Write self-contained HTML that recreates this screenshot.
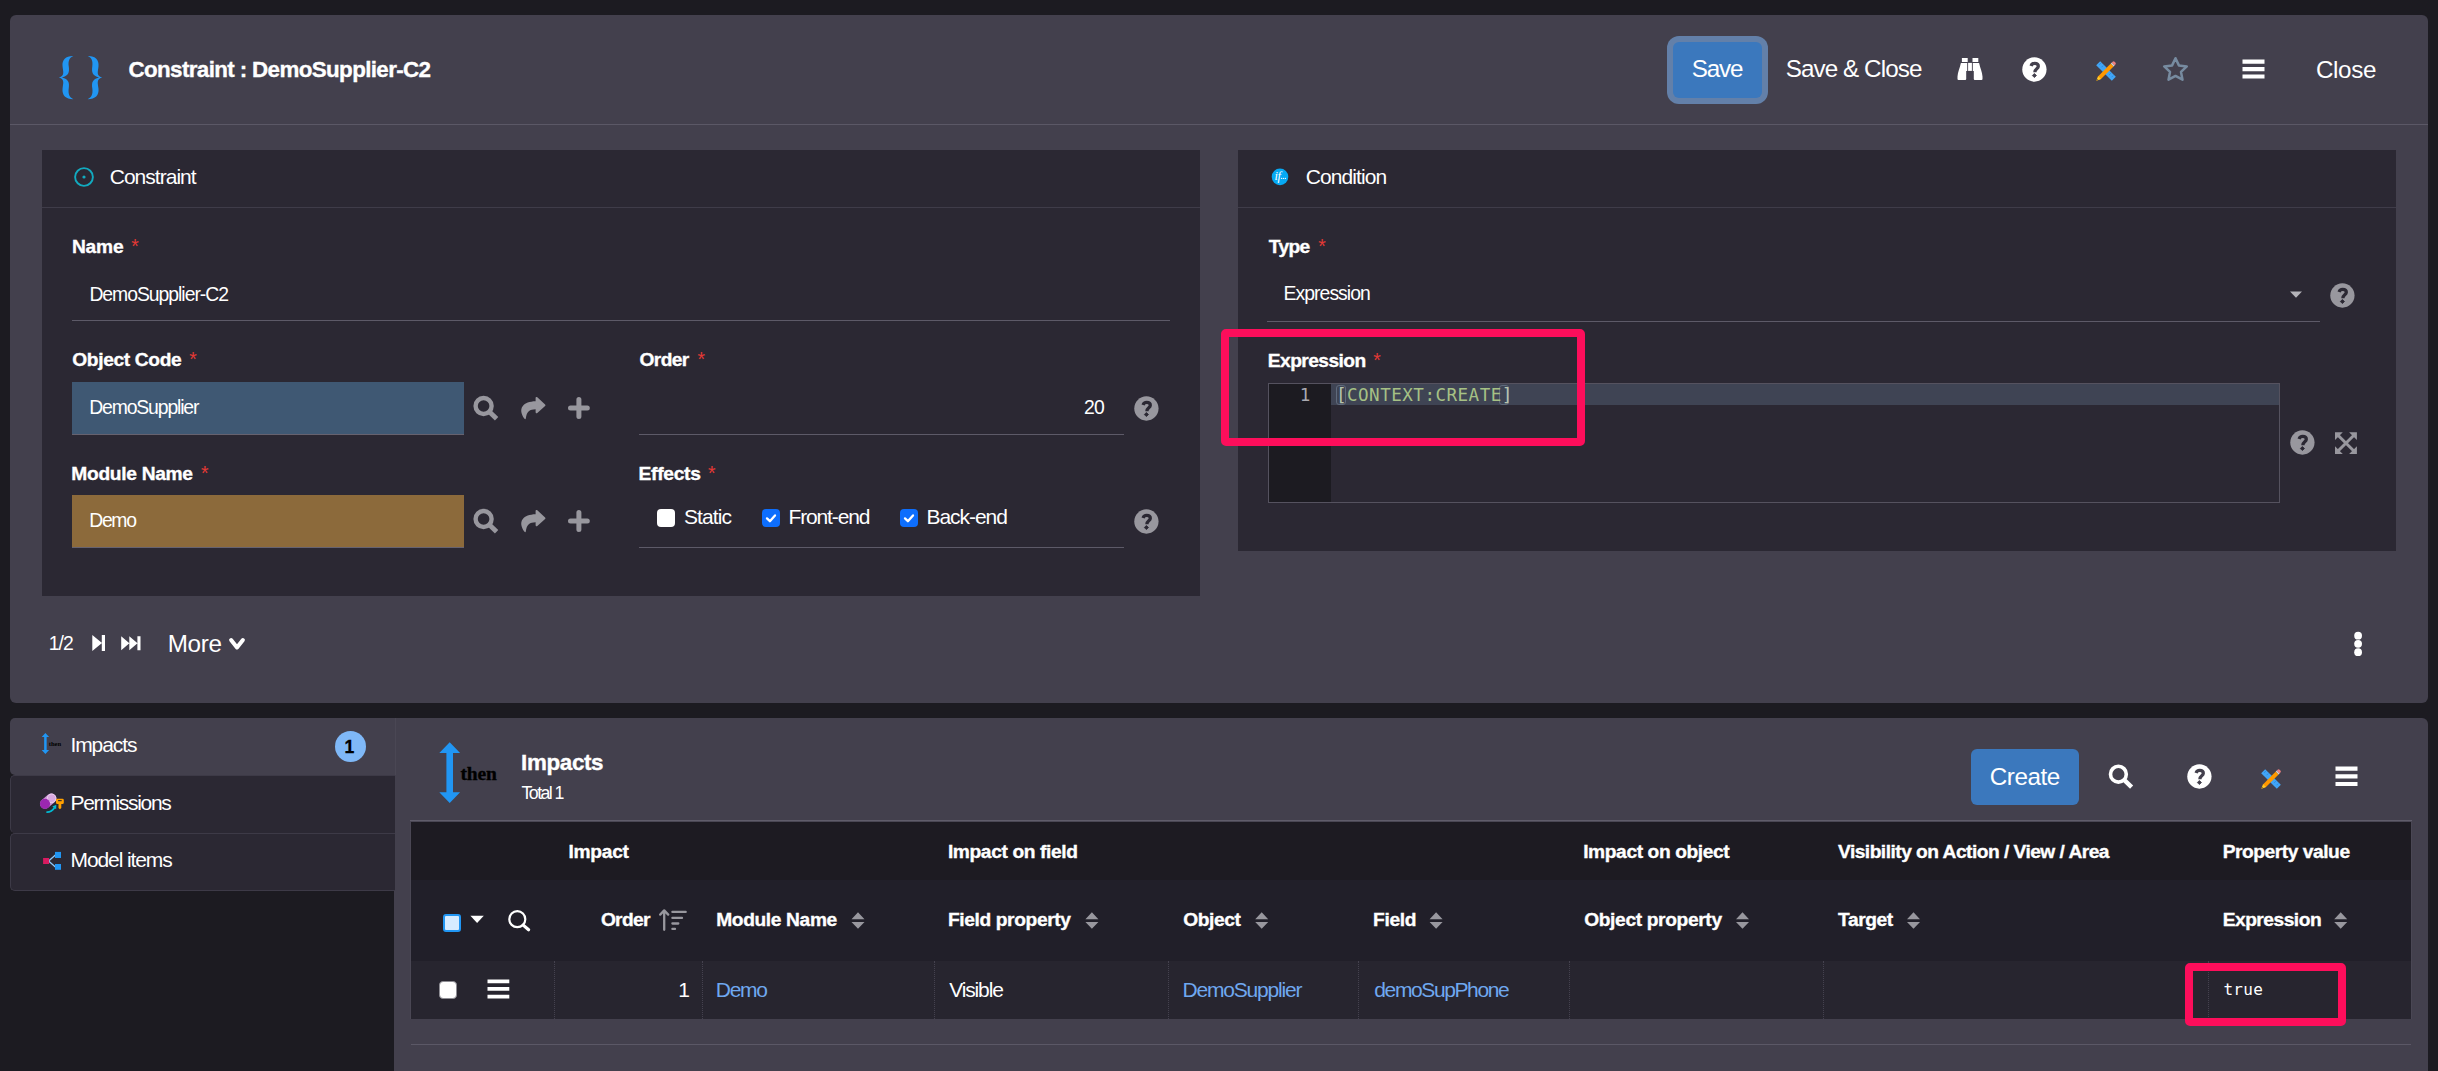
<!DOCTYPE html>
<html lang="en">
<head>
<meta charset="utf-8">
<title>Constraint : DemoSupplier-C2</title>
<style>
*{box-sizing:border-box;margin:0;padding:0}
html,body{width:2438px;height:1071px;overflow:hidden;background:#1c1b21}
body{position:relative;font-family:"Liberation Sans",sans-serif;color:#fff}
.abs,.t,svg.i{position:absolute}
.t{white-space:pre;line-height:normal;margin:0;display:block}
.b{-webkit-text-stroke:.35px currentColor}
h1.t,h2.t,label.t{font-weight:700}
.panel{background:#43404d}
.card{background:#2b2833}
.hl{background:#5d5a68;height:1px}
.btn{background:#3b78bd;border-radius:6px}
.pink{border:8px solid #fd0e5b;border-radius:5px}
.q{border-radius:50%;background:#98979e}
.sep{width:0;border-left:1px dotted #45424f;top:961px;height:58px}
</style>
</head>
<body>

<main>
<form>
<!-- ============ top form panel ============ -->
<div class="abs panel" style="left:10px;top:15px;width:2418px;height:688px;border-radius:6px"></div>
<div class="abs hl" style="left:10px;top:124px;width:2418px;background:#5b5866"></div>

<header>
<!-- braces logo -->
<svg class="i" style="left:40px;top:40px" width="100" height="70" viewBox="0 0 1530 1071">
 <g fill="#2196f3">
  <path id="br" d="M510,243 C395,240 335,300 345,400 C352,480 385,545 290,573 C385,601 352,666 345,746 C335,846 395,906 510,905 C450,880 428,830 440,740 C452,650 440,600 335,573 C440,546 452,496 440,406 C428,316 450,268 510,243 Z"/>
  <path d="M510,243 C395,240 335,300 345,400 C352,480 385,545 290,573 C385,601 352,666 345,746 C335,846 395,906 510,905 C450,880 428,830 440,740 C452,650 440,600 335,573 C440,546 452,496 440,406 C428,316 450,268 510,243 Z" transform="translate(1240,0) scale(-1,1)"/>
 </g>
</svg>

<!-- Save button w/ focus ring -->
<div class="abs" style="left:1667px;top:36px;width:101px;height:68px;border-radius:12px;background:#6380a9"></div>
<div class="abs btn" style="left:1673px;top:42px;width:89px;height:56px;background:#3b78bd"></div>

<!-- binoculars -->
<svg class="i" style="left:1957px;top:57px" width="27" height="24" viewBox="0 0 27 24">
 <g fill="#fff">
  <path d="M4.9,1 h5.8 v3.9 h-5.8z M15.5,1 h5.8 v3.9 h-5.8z"/>
  <path d="M3.9,5.9 H10.2 V13.9 H9.2 V22 a1,1 0 0 1 -1,1 H1.5 a1,1 0 0 1 -1,-1 V19.5 C.8,14.5 2.8,11.5 3.9,5.9 Z"/>
  <path d="M22.1,5.9 H15.8 V13.9 H16.8 V22 a1,1 0 0 0 1,1 H24.5 a1,1 0 0 0 1,-1 V19.5 C25.2,14.5 23.2,11.5 22.1,5.9 Z"/>
  <path d="M11.1,5.9 h3.8 v8 h-3.8z"/>
 </g>
</svg>
<!-- help -->
<svg class="i" style="left:2022px;top:56.5px" width="25" height="25" viewBox="0 0 25 25"><circle cx="12.4" cy="12.5" r="12.15" fill="#fff"/><path d="M9.1,8.9 C9.7,7 11.1,6.45 12.7,6.45 C14.8,6.45 16.3,7.6 16.3,9.3 C16.3,12 12.9,11.7 12.9,15.3" fill="none" stroke="#43404d" stroke-width="3.3"/><path d="M12.4,16.5 L14.5,18.5 L12.4,20.6 L10.3,18.5 Z" fill="#43404d" stroke="#43404d" stroke-width=".8" stroke-linejoin="round"/></svg>
<!-- pencil & ruler -->
<svg class="i" style="left:2095px;top:60px" width="22" height="22" viewBox="0 0 22 22">
 <path d="M1.2,5.2 L5.2,1.2 L20.8,16.8 L16.8,20.8 Z" fill="#42a5f5"/>
 <path d="M4.2,4.8l1.6,-1.6 M6.6,7.2l1.6,-1.6 M14.2,14.8l1.6,-1.6 M16.6,17.2l1.6,-1.6" stroke="#1e88e5" stroke-width=".8"/>
 <path d="M3.2,16.2 L15.8,3.6 L18.6,6.4 L6,19 L1.4,20.8 Z" fill="#ff9800"/>
 <path d="M15.8,3.6 L16.8,2.6 L19.6,5.4 L18.6,6.4 Z" fill="#cfd8dc"/>
 <path d="M16.8,2.6 L17.6,1.8 a1.4,1.4 0 0 1 2,0 l0.8,0.8 a1.4,1.4 0 0 1 0,2 L19.6,5.4 Z" fill="#ef8080"/>
 <path d="M3.2,16.2 L6,19 L1.4,20.8 Z" fill="#ffca28"/>
 <path d="M1.4,20.8 L2.1,18.9 L3.3,20.1 Z" fill="#6d5a2c"/>
</svg>
<!-- star -->
<svg class="i" style="left:2161px;top:55px" width="29" height="28" viewBox="0 0 29 28"><path d="M14.5,3.2 L17.9,10.4 L25.8,11.4 L20,16.9 L21.5,24.7 L14.5,20.9 L7.5,24.7 L9,16.9 L3.2,11.4 L11.1,10.4 Z" fill="none" stroke="#778ba0" stroke-width="2.5" stroke-linejoin="round"/></svg>
<!-- menu -->
<svg class="i" style="left:2242px;top:59px" width="23" height="20" viewBox="0 0 23 20"><path d="M.5,.5h22v4.2h-22z M.5,8h22v4.2h-22z M.5,15.4h22v4.2h-22z" fill="#fff"/></svg>
<h1 class="t b" style="left:128.50px;top:57.00px;font-family:'Liberation Sans', sans-serif;font-size:22.4px;font-weight:700;color:#fff;letter-spacing:-0.636px;">Constraint : DemoSupplier-C2</h1>
<span class="t" style="left:1691.70px;top:55.40px;font-family:'Liberation Sans', sans-serif;font-size:24.24px;font-weight:400;color:#fff;letter-spacing:-1.153px;">Save</span>
<span class="t" style="left:1785.70px;top:55.40px;font-family:'Liberation Sans', sans-serif;font-size:24.24px;font-weight:400;color:#fff;letter-spacing:-0.923px;">Save &amp; Close</span>
<span class="t" style="left:2315.90px;top:55.60px;font-family:'Liberation Sans', sans-serif;font-size:24.24px;font-weight:400;color:#fff;letter-spacing:-0.345px;">Close</span>
</header>

<article>
<!-- ============ Constraint card ============ -->
<div class="abs card" style="left:42px;top:150px;width:1158px;height:446px"></div>
<div class="abs hl" style="left:42px;top:207px;width:1158px;background:#3f3c49"></div>
<svg class="i" style="left:73px;top:166px" width="22" height="22" viewBox="0 0 22 22"><circle cx="11" cy="11" r="8.9" fill="none" stroke="#12aabf" stroke-width="1.9"/><circle cx="11" cy="11" r="1.6" fill="#12aabf"/></svg>

<div class="abs hl" style="left:72px;top:320px;width:1098px"></div>
<div class="abs" style="left:72px;top:382px;width:392px;height:53px;background:#3f5873;border-bottom:1px solid #66626f"></div>
<div class="abs" style="left:72px;top:495px;width:392px;height:53px;background:#8c6a3b;border-bottom:1px solid #66626f"></div>
<div class="abs hl" style="left:639px;top:434px;width:485px"></div>
<div class="abs hl" style="left:639px;top:547px;width:485px"></div>

<!-- search / goto / add icons  (row 1 & 2) -->
<svg class="i" style="left:470px;top:393px" width="125" height="30" viewBox="0 0 125 30">
 <g id="acts">
  <circle cx="13.6" cy="13" r="8" fill="none" stroke="#98979e" stroke-width="4.4"/>
  <path d="M19.6,19 L26.6,25.8" stroke="#98979e" stroke-width="4.8" stroke-linecap="butt"/>
  <path d="M65.6,5 a1,1 0 0 1 1.7,-.7 L75.1,11.4 a1,1 0 0 1 0,1.5 L67.3,20 a1,1 0 0 1 -1.7,-.7 V16.2 C59.8,16.4 56.6,18.2 55.8,25.6 C55.7,26.4 54.9,26.4 54.5,25.8 C47,15.2 53.6,8.4 65.6,8.2 Z" fill="#98979e"/>
  <path d="M108.9,6.6 V23.4 M100.5,15 H117.3" stroke="#98979e" stroke-width="5" stroke-linecap="round"/>
 </g>
</svg>
<svg class="i" style="left:470px;top:506px" width="125" height="30" viewBox="0 0 125 30">
  <circle cx="13.6" cy="13" r="8" fill="none" stroke="#98979e" stroke-width="4.4"/>
  <path d="M19.6,19 L26.6,25.8" stroke="#98979e" stroke-width="4.8" stroke-linecap="butt"/>
  <path d="M65.6,5 a1,1 0 0 1 1.7,-.7 L75.1,11.4 a1,1 0 0 1 0,1.5 L67.3,20 a1,1 0 0 1 -1.7,-.7 V16.2 C59.8,16.4 56.6,18.2 55.8,25.6 C55.7,26.4 54.9,26.4 54.5,25.8 C47,15.2 53.6,8.4 65.6,8.2 Z" fill="#98979e"/>
  <path d="M108.9,6.6 V23.4 M100.5,15 H117.3" stroke="#98979e" stroke-width="5" stroke-linecap="round"/>
</svg>

<!-- help bubbles -->
<svg class="i" style="left:1133.5px;top:396px" width="25" height="25" viewBox="0 0 25 25"><circle cx="12.4" cy="12.5" r="12.15" fill="#98979e"/><path d="M9.1,8.9 C9.7,7 11.1,6.45 12.7,6.45 C14.8,6.45 16.3,7.6 16.3,9.3 C16.3,12 12.9,11.7 12.9,15.3" fill="none" stroke="#2b2833" stroke-width="3.3"/><path d="M12.4,16.5 L14.5,18.5 L12.4,20.6 L10.3,18.5 Z" fill="#2b2833" stroke="#2b2833" stroke-width=".8" stroke-linejoin="round"/></svg>
<svg class="i" style="left:1133.5px;top:508.5px" width="25" height="25" viewBox="0 0 25 25"><circle cx="12.4" cy="12.5" r="12.15" fill="#98979e"/><path d="M9.1,8.9 C9.7,7 11.1,6.45 12.7,6.45 C14.8,6.45 16.3,7.6 16.3,9.3 C16.3,12 12.9,11.7 12.9,15.3" fill="none" stroke="#2b2833" stroke-width="3.3"/><path d="M12.4,16.5 L14.5,18.5 L12.4,20.6 L10.3,18.5 Z" fill="#2b2833" stroke="#2b2833" stroke-width=".8" stroke-linejoin="round"/></svg>

<!-- checkboxes -->
<div class="abs" style="left:657px;top:509px;width:18px;height:18px;border-radius:4px;background:#fff"></div>
<svg class="i" style="left:762px;top:509px" width="18" height="18" viewBox="0 0 18 18"><rect width="18" height="18" rx="4" fill="#0d6efd"/><path d="M5,9.4 L7.9,12.2 L13,6.4" fill="none" stroke="#fff" stroke-width="2.3" stroke-linecap="round" stroke-linejoin="round"/></svg>
<svg class="i" style="left:900px;top:509px" width="18" height="18" viewBox="0 0 18 18"><rect width="18" height="18" rx="4" fill="#0d6efd"/><path d="M5,9.4 L7.9,12.2 L13,6.4" fill="none" stroke="#fff" stroke-width="2.3" stroke-linecap="round" stroke-linejoin="round"/></svg>
</article>

<article>
<!-- ============ Condition card ============ -->
<div class="abs card" style="left:1238px;top:150px;width:1158px;height:401px"></div>
<div class="abs hl" style="left:1238px;top:207px;width:1158px;background:#3f3c49"></div>
<svg class="i" style="left:1271px;top:168px" width="18" height="18" viewBox="0 0 18 18"><circle cx="9" cy="8.85" r="8.3" fill="#06a9f4"/><text x="3.4" y="12.4" font-family="Liberation Serif" font-style="italic" font-size="12.5" fill="#fff" letter-spacing="-.3">if</text><g fill="#e8f6fe"><circle cx="10.6" cy="10.4" r=".7"/><circle cx="12.5" cy="10.4" r=".7"/><circle cx="14.4" cy="10.4" r=".7"/></g></svg>
<div class="abs hl" style="left:1267px;top:321px;width:1053px"></div>
<svg class="i" style="left:2289px;top:291px" width="14" height="8" viewBox="0 0 14 8"><path d="M1,.6 H13 L7,6.8 Z" fill="#b4b3b9"/></svg>
<svg class="i" style="left:2329.5px;top:282.5px" width="25" height="25" viewBox="0 0 25 25"><circle cx="12.4" cy="12.5" r="12.15" fill="#98979e"/><path d="M9.1,8.9 C9.7,7 11.1,6.45 12.7,6.45 C14.8,6.45 16.3,7.6 16.3,9.3 C16.3,12 12.9,11.7 12.9,15.3" fill="none" stroke="#2b2833" stroke-width="3.3"/><path d="M12.4,16.5 L14.5,18.5 L12.4,20.6 L10.3,18.5 Z" fill="#2b2833" stroke="#2b2833" stroke-width=".8" stroke-linejoin="round"/></svg>

<!-- code editor -->
<div class="abs" style="left:1268px;top:383px;width:1012px;height:120px;border:1px solid #55525f;background:#2b2833"></div>
<div class="abs" style="left:1269px;top:384px;width:62px;height:118px;background:#1c1b21"></div>
<div class="abs" style="left:1331px;top:384px;width:948px;height:21px;background:#3f4454"></div>
<div class="abs" style="left:1336px;top:385px;width:10px;height:20px;border:1px solid #5f6a7c;border-radius:3px"></div>
<div class="abs" style="left:1499px;top:385px;width:10px;height:20px;border:1px solid #5f6a7c;border-radius:3px"></div>
<svg class="i" style="left:2290px;top:430px" width="25" height="25" viewBox="0 0 25 25"><circle cx="12.4" cy="12.5" r="12.15" fill="#98979e"/><path d="M9.1,8.9 C9.7,7 11.1,6.45 12.7,6.45 C14.8,6.45 16.3,7.6 16.3,9.3 C16.3,12 12.9,11.7 12.9,15.3" fill="none" stroke="#2b2833" stroke-width="3.3"/><path d="M12.4,16.5 L14.5,18.5 L12.4,20.6 L10.3,18.5 Z" fill="#2b2833" stroke="#2b2833" stroke-width=".8" stroke-linejoin="round"/></svg>
<svg class="i" style="left:2334px;top:431px" width="24" height="24" viewBox="0 0 24 24">
 <path d="M1,1.2 h7.8 l-7.8,7.8z M22.9,1.2 v7.8 l-7.8,-7.8z M1,23 v-7.8 l7.8,7.8z M22.9,23 h-7.8 l7.8,-7.8z" fill="#98979e"/>
 <path d="M4,4.2 L19.9,20 M19.9,4.2 L4,20" stroke="#98979e" stroke-width="3" fill="none"/>
</svg>
</article>

<!-- card titles, field labels and values -->
<span class="t" style="left:109.70px;top:165.00px;font-family:'Liberation Sans', sans-serif;font-size:21.01px;font-weight:400;color:#fff;letter-spacing:-0.975px;">Constraint</span>
<span class="t" style="left:1305.80px;top:165.00px;font-family:'Liberation Sans', sans-serif;font-size:21.01px;font-weight:400;color:#fff;letter-spacing:-0.918px;">Condition</span>
<label class="t b" style="left:71.90px;top:235.80px;font-family:'Liberation Sans', sans-serif;font-size:19.2px;font-weight:700;color:#fff;letter-spacing:-0.196px;">Name</label>
<span class="t" style="left:131.30px;top:234.80px;font-family:'Liberation Sans', sans-serif;font-size:19.39px;font-weight:400;color:#e53935;letter-spacing:0.000px;">*</span>
<label class="t b" style="left:72.30px;top:348.80px;font-family:'Liberation Sans', sans-serif;font-size:19.2px;font-weight:700;color:#fff;letter-spacing:-0.364px;">Object Code</label>
<span class="t" style="left:189.20px;top:347.80px;font-family:'Liberation Sans', sans-serif;font-size:19.39px;font-weight:400;color:#e53935;letter-spacing:0.000px;">*</span>
<label class="t b" style="left:639.60px;top:348.80px;font-family:'Liberation Sans', sans-serif;font-size:19.2px;font-weight:700;color:#fff;letter-spacing:-0.646px;">Order</label>
<span class="t" style="left:697.40px;top:347.80px;font-family:'Liberation Sans', sans-serif;font-size:19.39px;font-weight:400;color:#e53935;letter-spacing:0.000px;">*</span>
<label class="t b" style="left:71.30px;top:463.30px;font-family:'Liberation Sans', sans-serif;font-size:19.2px;font-weight:700;color:#fff;letter-spacing:-0.307px;">Module Name</label>
<span class="t" style="left:201.00px;top:462.30px;font-family:'Liberation Sans', sans-serif;font-size:19.39px;font-weight:400;color:#e53935;letter-spacing:0.000px;">*</span>
<label class="t b" style="left:638.60px;top:463.30px;font-family:'Liberation Sans', sans-serif;font-size:19.2px;font-weight:700;color:#fff;letter-spacing:-0.285px;">Effects</label>
<span class="t" style="left:708.00px;top:462.30px;font-family:'Liberation Sans', sans-serif;font-size:19.39px;font-weight:400;color:#e53935;letter-spacing:0.000px;">*</span>
<label class="t b" style="left:1268.80px;top:235.90px;font-family:'Liberation Sans', sans-serif;font-size:19.2px;font-weight:700;color:#fff;letter-spacing:-0.629px;">Type</label>
<span class="t" style="left:1318.20px;top:234.90px;font-family:'Liberation Sans', sans-serif;font-size:19.39px;font-weight:400;color:#e53935;letter-spacing:0.000px;">*</span>
<label class="t b" style="left:1267.80px;top:350.00px;font-family:'Liberation Sans', sans-serif;font-size:19.2px;font-weight:700;color:#fff;letter-spacing:-0.569px;">Expression</label>
<span class="t" style="left:1373.20px;top:349.00px;font-family:'Liberation Sans', sans-serif;font-size:19.39px;font-weight:400;color:#e53935;letter-spacing:0.000px;">*</span>
<span class="t" style="left:89.40px;top:282.90px;font-family:'Liberation Sans', sans-serif;font-size:19.39px;font-weight:400;color:#fff;letter-spacing:-1.029px;">DemoSupplier-C2</span>
<span class="t" style="left:89.20px;top:395.60px;font-family:'Liberation Sans', sans-serif;font-size:19.39px;font-weight:400;color:#fff;letter-spacing:-1.138px;">DemoSupplier</span>
<span class="t" style="left:89.20px;top:508.50px;font-family:'Liberation Sans', sans-serif;font-size:19.39px;font-weight:400;color:#fff;letter-spacing:-1.302px;">Demo</span>
<span class="t" style="left:1084.00px;top:395.60px;font-family:'Liberation Sans', sans-serif;font-size:19.39px;font-weight:400;color:#fff;letter-spacing:-0.775px;">20</span>
<span class="t" style="left:683.90px;top:504.80px;font-family:'Liberation Sans', sans-serif;font-size:21.01px;font-weight:400;color:#fff;letter-spacing:-0.884px;">Static</span>
<span class="t" style="left:788.50px;top:504.80px;font-family:'Liberation Sans', sans-serif;font-size:21.01px;font-weight:400;color:#fff;letter-spacing:-1.146px;">Front-end</span>
<span class="t" style="left:926.50px;top:504.80px;font-family:'Liberation Sans', sans-serif;font-size:21.01px;font-weight:400;color:#fff;letter-spacing:-1.048px;">Back-end</span>
<span class="t" style="left:1283.60px;top:281.50px;font-family:'Liberation Sans', sans-serif;font-size:19.39px;font-weight:400;color:#fff;letter-spacing:-0.963px;">Expression</span>
<span class="t" style="left:1299.80px;top:384.50px;font-family:'DejaVu Sans Mono', 'Liberation Mono', monospace;font-size:17.6px;font-weight:400;color:#a9a9b0;letter-spacing:0.000px;">1</span>
<span class="t" style="left:1335.90px;top:384.50px;font-family:'DejaVu Sans Mono', 'Liberation Mono', monospace;font-size:17.6px;font-weight:400;color:#a6c185;letter-spacing:0.468px;"><span style="color:#b7c3ad">[</span>CONTEXT:CREATE<span style="color:#b7c3ad">]</span></span>

<footer>
<!-- footer of form panel -->
<svg class="i" style="left:91px;top:634px" width="52" height="18" viewBox="0 0 52 18">
 <g fill="#fff">
  <path d="M1.3,.9 L11,9 L1.3,17.1 Z M10.8,.9 h3.2 v16.2 h-3.2z"/>
  <path d="M30.2,2.2 L38.4,9.2 L30.2,16.2 Z M38.3,2.2 L46.5,9.2 L38.3,16.2 Z M46.4,2.2 h3.1 v14 h-3.1z"/>
 </g>
</svg>
<svg class="i" style="left:227px;top:636px" width="20" height="16" viewBox="0 0 20 16"><path d="M4.1,4 L10,11.5 L15.9,4" fill="none" stroke="#fff" stroke-width="4" stroke-linecap="round" stroke-linejoin="round"/></svg>
<svg class="i" style="left:2353px;top:631px" width="10" height="26" viewBox="0 0 10 26"><g fill="#fff"><circle cx="5.1" cy="4.7" r="3.9"/><circle cx="5.1" cy="12.8" r="3.9"/><circle cx="5.1" cy="21.2" r="3.9"/></g></svg>
<span class="t" style="left:48.80px;top:632.20px;font-family:'Liberation Sans', sans-serif;font-size:19.39px;font-weight:400;color:#fff;letter-spacing:-1.029px;">1/2</span>
<span class="t" style="left:167.70px;top:629.60px;font-family:'Liberation Sans', sans-serif;font-size:24.24px;font-weight:400;color:#fff;letter-spacing:-0.345px;">More</span>
</footer>
</form>

<nav>
<!-- ============ bottom: tabs ============ -->
<div class="abs panel" style="left:394px;top:718px;width:2034px;height:360px;border-radius:0 6px 0 0"></div>
<div class="abs panel" style="left:10px;top:718px;width:386px;height:57px;border-radius:5px 0 0 5px"></div>
<div class="abs" style="left:395px;top:718px;width:1px;height:57px;background:#4a4754"></div>
<div class="abs card" style="left:10px;top:775px;width:385px;height:58px;border:1px solid #3d3a47;border-right:0;border-bottom:0;border-radius:5px 0 0 5px"></div>
<div class="abs card" style="left:10px;top:833px;width:385px;height:58px;border:1px solid #3d3a47;border-right:0;border-radius:5px 0 0 5px"></div>
<!-- tab icons -->
<svg class="i" style="left:40px;top:732px" width="24" height="24" viewBox="0 0 24 24">
 <path d="M5.4,1 L9.1,5 H6.65 V18.1 H9.1 L5.4,22.1 L1.7,18.1 H4.15 V5 H1.7 Z" fill="#2196f3"/>
 <text x="8.7" y="14" font-family="Liberation Serif" font-weight="700" font-size="6.6" fill="#000">then</text>
</svg>
<svg class="i" style="left:38px;top:791px" width="28" height="24" viewBox="0 0 28 24">
 <path d="M7,12.8 L13.4,7.4" stroke="#ce93d8" stroke-width="10" stroke-linecap="round"/>
 <circle cx="13.6" cy="7.3" r="4.3" fill="#d9a9e1" stroke="#ebd3ef" stroke-width="1"/>
 <circle cx="7" cy="12.8" r="5.1" fill="#9c27b0"/>
 <path d="M8.4,21.1 Q13.6,21.4 16.4,16.8" fill="none" stroke="#00bcd4" stroke-width="1.8"/>
 <path d="M14.3,15.5 L18.3,13.7 L18.2,18.2 Z" fill="#00bcd4"/>
 <path d="M19.4,7.7 h5 a1.4,1.4 0 0 1 1.4,1.4 v2.6 a1.4,1.4 0 0 1 -1.4,1.4 h-1.1 v4 l-1.4,1.1 l-1.4,-1.1 v-4 h-1.1 a1.4,1.4 0 0 1 -1.4,-1.4 v-2.6 a1.4,1.4 0 0 1 1.4,-1.4z" fill="#ffa000"/>
 <rect x="20.1" y="9.1" width="3.6" height="1.1" fill="#2b2833"/>
</svg>
<svg class="i" style="left:42px;top:851px" width="21" height="20" viewBox="0 0 21 20">
 <path d="M6.6,10 L13.4,4 M6.6,10 L13.4,16" stroke="#90caf9" stroke-width="1.3" fill="none"/>
 <rect x="1.1" y="7" width="6" height="6" fill="#d81b60"/>
 <rect x="13" y=".9" width="6" height="6.1" fill="#2196f3"/>
 <rect x="13" y="13" width="6" height="5.8" fill="#2196f3"/>
</svg>
<div class="abs" style="left:335px;top:731px;width:31px;height:31px;border-radius:50%;background:#7fb8f7"></div>
<span class="t" style="left:70.50px;top:732.80px;font-family:'Liberation Sans', sans-serif;font-size:21.01px;font-weight:400;color:#fff;letter-spacing:-1.103px;">Impacts</span>
<span class="t" style="left:70.50px;top:790.60px;font-family:'Liberation Sans', sans-serif;font-size:21.01px;font-weight:400;color:#fff;letter-spacing:-1.306px;">Permissions</span>
<span class="t" style="left:70.50px;top:848.20px;font-family:'Liberation Sans', sans-serif;font-size:21.01px;font-weight:400;color:#fff;letter-spacing:-1.100px;">Model items</span>
<span class="t b" style="left:344.60px;top:736.80px;font-family:'Liberation Sans', sans-serif;font-size:17.6px;font-weight:700;color:#000;letter-spacing:0.000px;">1</span>
</nav>

<section>
<!-- ============ bottom: list panel ============ -->
<svg class="i" style="left:438px;top:741px" width="24" height="64" viewBox="0 0 24 64"><path d="M11.7,1.3 L22.1,12 H15 V51.3 H22.1 L11.7,62 L1.3,51.3 H8.4 V12 H1.3 Z" fill="#2196f3"/></svg>
<div class="abs btn" style="left:1971px;top:749px;width:108px;height:56px"></div>
<svg class="i" style="left:2107px;top:763px" width="28" height="28" viewBox="0 0 28 28"><circle cx="11.4" cy="11.2" r="7.9" fill="none" stroke="#fff" stroke-width="3.6"/><path d="M17.4,17.2 L24.6,24.2" stroke="#fff" stroke-width="4.4"/></svg>
<svg class="i" style="left:2186.5px;top:763.5px" width="25" height="25" viewBox="0 0 25 25"><circle cx="12.4" cy="12.5" r="12.15" fill="#fff"/><path d="M9.1,8.9 C9.7,7 11.1,6.45 12.7,6.45 C14.8,6.45 16.3,7.6 16.3,9.3 C16.3,12 12.9,11.7 12.9,15.3" fill="none" stroke="#43404d" stroke-width="3.3"/><path d="M12.4,16.5 L14.5,18.5 L12.4,20.6 L10.3,18.5 Z" fill="#43404d" stroke="#43404d" stroke-width=".8" stroke-linejoin="round"/></svg>
<svg class="i" style="left:2259.5px;top:767.5px" width="22" height="22" viewBox="0 0 22 22">
 <path d="M1.2,5.2 L5.2,1.2 L20.8,16.8 L16.8,20.8 Z" fill="#42a5f5"/>
 <path d="M4.2,4.8l1.6,-1.6 M6.6,7.2l1.6,-1.6 M14.2,14.8l1.6,-1.6 M16.6,17.2l1.6,-1.6" stroke="#1e88e5" stroke-width=".8"/>
 <path d="M3.2,16.2 L15.8,3.6 L18.6,6.4 L6,19 L1.4,20.8 Z" fill="#ff9800"/>
 <path d="M15.8,3.6 L16.8,2.6 L19.6,5.4 L18.6,6.4 Z" fill="#cfd8dc"/>
 <path d="M16.8,2.6 L17.6,1.8 a1.4,1.4 0 0 1 2,0 l0.8,0.8 a1.4,1.4 0 0 1 0,2 L19.6,5.4 Z" fill="#ef8080"/>
 <path d="M3.2,16.2 L6,19 L1.4,20.8 Z" fill="#ffca28"/>
 <path d="M1.4,20.8 L2.1,18.9 L3.3,20.1 Z" fill="#6d5a2c"/>
</svg>
<svg class="i" style="left:2334.5px;top:765.5px" width="23" height="21" viewBox="0 0 23 21"><path d="M.5,.5h22v4.2h-22z M.5,8.2h22v4.2h-22z M.5,15.9h22v4.2h-22z" fill="#fff"/></svg>
<span class="t b" style="left:460.60px;top:763.20px;font-family:'Liberation Serif', serif;font-size:19.5px;font-weight:700;color:#000;letter-spacing:-0.231px;">then</span>
<h2 class="t b" style="left:521.00px;top:750.00px;font-family:'Liberation Sans', sans-serif;font-size:22.4px;font-weight:700;color:#fff;letter-spacing:-0.345px;">Impacts</h2>
<span class="t" style="left:521.60px;top:783.00px;font-family:'Liberation Sans', sans-serif;font-size:17.78px;font-weight:400;color:#fff;letter-spacing:-1.610px;">Total 1</span>
<span class="t" style="left:1989.70px;top:762.80px;font-family:'Liberation Sans', sans-serif;font-size:24.24px;font-weight:400;color:#fff;letter-spacing:-0.432px;">Create</span>

<!-- table -->
<div class="abs" style="left:410px;top:820px;width:2002px;height:1px;background:#605d6b"></div>
<div class="abs" style="left:410px;top:821px;width:2002px;height:198px;background:#4a4754"></div>
<div class="abs" style="left:411px;top:822px;width:2000px;height:58px;background:#1d1b22"></div>
<div class="abs" style="left:411px;top:880px;width:2000px;height:81px;background:#211f29"></div>
<div class="abs" style="left:411px;top:961px;width:2000px;height:58px;background:#27252f"></div>
<div class="abs hl" style="left:411px;top:1044px;width:2000px;background:#5b5866"></div>
<div class="abs sep" style="left:554px"></div><div class="abs sep" style="left:702px"></div><div class="abs sep" style="left:934px"></div>
<div class="abs sep" style="left:1168px"></div><div class="abs sep" style="left:1358px"></div><div class="abs sep" style="left:1569px"></div>
<div class="abs sep" style="left:1823px"></div><div class="abs sep" style="left:2208px"></div>

<!-- select-all, caret, search -->
<div class="abs" style="left:443px;top:914px;width:18px;height:18px;border:2.6px solid #2196f3;border-radius:3px;background:#d6ebff"></div>
<svg class="i" style="left:469px;top:915px" width="16" height="9" viewBox="0 0 16 9"><path d="M1.4,.8 H14.8 L8.1,8 Z" fill="#fff"/></svg>
<svg class="i" style="left:506px;top:908px" width="26" height="26" viewBox="0 0 26 26"><circle cx="11.3" cy="11.2" r="8" fill="none" stroke="#fff" stroke-width="2.2"/><path d="M17.2,17.1 L22.6,21.8" stroke="#fff" stroke-width="3.2" stroke-linecap="round"/></svg>
<!-- order sort -->
<svg class="i" style="left:659px;top:908px" width="29" height="24" viewBox="0 0 29 24">
 <path d="M5.2,21.8 V2.6 M1.2,6.6 L5.2,2.4 L9.2,6.6" fill="none" stroke="#98979e" stroke-width="2.3" stroke-linecap="round" stroke-linejoin="round"/>
 <path d="M13.4,3.9 H26.7 M13.4,9.9 H23 M13.4,15.5 H19.3 M13.4,20.9 H16" stroke="#98979e" stroke-width="2.3" stroke-linecap="round"/>
</svg>
<!-- sort carets -->
<svg class="i" style="left:0;top:0;overflow:visible" width="1" height="1">
 <g fill="#98979e">
  <path id="sc" d="M0,7 L6.5,0 L13,7 Z M0,9.8 H13 L6.5,16.6 Z" transform="translate(851.5,912.2)"/>
  <path d="M0,7 L6.5,0 L13,7 Z M0,9.8 H13 L6.5,16.6 Z" transform="translate(1085.4,912.2)"/>
  <path d="M0,7 L6.5,0 L13,7 Z M0,9.8 H13 L6.5,16.6 Z" transform="translate(1255.2,912.2)"/>
  <path d="M0,7 L6.5,0 L13,7 Z M0,9.8 H13 L6.5,16.6 Z" transform="translate(1429.6,912.2)"/>
  <path d="M0,7 L6.5,0 L13,7 Z M0,9.8 H13 L6.5,16.6 Z" transform="translate(1736,912.2)"/>
  <path d="M0,7 L6.5,0 L13,7 Z M0,9.8 H13 L6.5,16.6 Z" transform="translate(1907,912.2)"/>
  <path d="M0,7 L6.5,0 L13,7 Z M0,9.8 H13 L6.5,16.6 Z" transform="translate(2334.2,912.2)"/>
 </g>
</svg>
<!-- row controls -->
<div class="abs" style="left:439px;top:981px;width:18px;height:18px;border:1px solid #8d8c93;border-radius:4px;background:#fff"></div>
<svg class="i" style="left:486.5px;top:979px" width="23" height="20" viewBox="0 0 23 20"><path d="M.5,.5h21.8v3.8h-21.8z M.5,7.9h21.8v3.8h-21.8z M.5,15.7h21.8v3.8h-21.8z" fill="#fff"/></svg>
<span class="t b" style="left:568.40px;top:840.80px;font-family:'Liberation Sans', sans-serif;font-size:19.2px;font-weight:700;color:#fff;letter-spacing:-0.251px;">Impact</span>
<span class="t b" style="left:947.90px;top:840.80px;font-family:'Liberation Sans', sans-serif;font-size:19.2px;font-weight:700;color:#fff;letter-spacing:-0.384px;">Impact on field</span>
<span class="t b" style="left:1583.20px;top:840.80px;font-family:'Liberation Sans', sans-serif;font-size:19.2px;font-weight:700;color:#fff;letter-spacing:-0.397px;">Impact on object</span>
<span class="t b" style="left:1838.00px;top:840.80px;font-family:'Liberation Sans', sans-serif;font-size:19.2px;font-weight:700;color:#fff;letter-spacing:-0.528px;">Visibility on Action / View / Area</span>
<span class="t b" style="left:2222.70px;top:840.80px;font-family:'Liberation Sans', sans-serif;font-size:19.2px;font-weight:700;color:#fff;letter-spacing:-0.456px;">Property value</span>
<span class="t b" style="left:600.90px;top:909.40px;font-family:'Liberation Sans', sans-serif;font-size:19.2px;font-weight:700;color:#fff;letter-spacing:-0.696px;">Order</span>
<span class="t b" style="left:716.20px;top:909.40px;font-family:'Liberation Sans', sans-serif;font-size:19.2px;font-weight:700;color:#fff;letter-spacing:-0.367px;">Module Name</span>
<span class="t b" style="left:947.90px;top:909.40px;font-family:'Liberation Sans', sans-serif;font-size:19.2px;font-weight:700;color:#fff;letter-spacing:-0.374px;">Field property</span>
<span class="t b" style="left:1183.30px;top:909.40px;font-family:'Liberation Sans', sans-serif;font-size:19.2px;font-weight:700;color:#fff;letter-spacing:-0.424px;">Object</span>
<span class="t b" style="left:1373.00px;top:909.40px;font-family:'Liberation Sans', sans-serif;font-size:19.2px;font-weight:700;color:#fff;letter-spacing:-0.313px;">Field</span>
<span class="t b" style="left:1584.20px;top:909.40px;font-family:'Liberation Sans', sans-serif;font-size:19.2px;font-weight:700;color:#fff;letter-spacing:-0.357px;">Object property</span>
<span class="t b" style="left:1838.00px;top:909.40px;font-family:'Liberation Sans', sans-serif;font-size:19.2px;font-weight:700;color:#fff;letter-spacing:-0.405px;">Target</span>
<span class="t b" style="left:2222.70px;top:909.40px;font-family:'Liberation Sans', sans-serif;font-size:19.2px;font-weight:700;color:#fff;letter-spacing:-0.502px;">Expression</span>
<span class="t" style="left:678.20px;top:977.90px;font-family:'Liberation Sans', sans-serif;font-size:21.01px;font-weight:400;color:#fff;letter-spacing:0.000px;">1</span>
<span class="t" style="left:715.80px;top:977.90px;font-family:'Liberation Sans', sans-serif;font-size:21.01px;font-weight:400;color:#6fa8ef;letter-spacing:-1.279px;">Demo</span>
<span class="t" style="left:949.20px;top:977.90px;font-family:'Liberation Sans', sans-serif;font-size:21.01px;font-weight:400;color:#fff;letter-spacing:-1.134px;">Visible</span>
<span class="t" style="left:1182.50px;top:977.90px;font-family:'Liberation Sans', sans-serif;font-size:21.01px;font-weight:400;color:#6fa8ef;letter-spacing:-1.188px;">DemoSupplier</span>
<span class="t" style="left:1374.30px;top:977.90px;font-family:'Liberation Sans', sans-serif;font-size:21.01px;font-weight:400;color:#6fa8ef;letter-spacing:-1.385px;">demoSupPhone</span>
<span class="t" style="left:2223.40px;top:979.60px;font-family:'DejaVu Sans Mono', 'Liberation Mono', monospace;font-size:16px;font-weight:400;color:#fff;letter-spacing:0.301px;">true</span>
</section>
</main>

<!-- annotation rectangles drawn over the screenshot -->
<aside>
<!-- pink highlight 1 -->
<div class="abs pink" style="left:1221px;top:329px;width:364px;height:117px"></div>
<!-- pink highlight 2 -->
<div class="abs pink" style="left:2185px;top:963px;width:161px;height:63px"></div>
</aside>
</body>
</html>
